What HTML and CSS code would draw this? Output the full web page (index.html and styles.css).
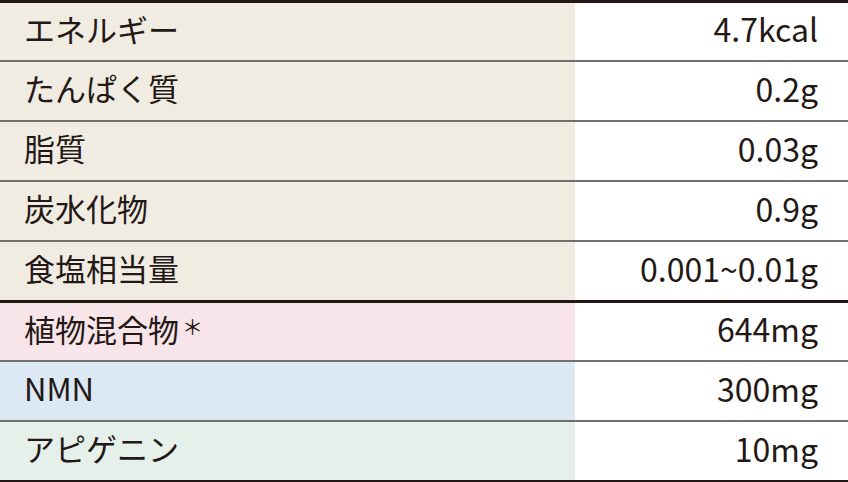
FILE: index.html
```html
<!DOCTYPE html>
<html lang="ja">
<head>
<meta charset="utf-8">
<link rel="stylesheet" href="styles.css">
</head>
<body>
<div class="table">
  <div class="row beige first"><div class="label">エネルギー</div><div class="value">4.7kcal</div></div>
  <div class="row beige"><div class="label">たんぱく質</div><div class="value">0.2g</div></div>
  <div class="row beige"><div class="label">脂質</div><div class="value">0.03g</div></div>
  <div class="row beige"><div class="label">炭水化物</div><div class="value">0.9g</div></div>
  <div class="row beige"><div class="label">食塩相当量</div><div class="value">0.001~0.01g</div></div>
  <div class="row pink group"><div class="label">植物混合物<span class="mark">＊</span></div><div class="value">644mg</div></div>
  <div class="row blue"><div class="label">NMN</div><div class="value">300mg</div></div>
  <div class="row green last"><div class="label">アピゲニン</div><div class="value">10mg</div></div>
</div>
</body>
</html>
```

FILE: styles.css
```css
html, body {
  margin: 0;
  padding: 0;
  background: #ffffff;
}
body {
  font-family: "Noto Sans CJK JP", "Noto Sans", sans-serif;
  color: #231815;
  width: 848px;
  height: 482px;
  overflow: hidden;
}
.table {
  display: flex;
  flex-direction: column;
}
.row {
  display: grid;
  grid-template-columns: 575px 1fr;
  height: 60px;
  box-sizing: border-box;
  border-top: 2px solid #707070;
}
.row.first {
  border-top: 3px solid #231815;
}
.row.group {
  border-top: 3px solid #231815;
}
.row.last {
  height: 62px;
  border-bottom: 2px solid #231815;
}
.label, .value {
  display: flex;
  align-items: center;
  line-height: 1;
  padding-bottom: 7px;
}
.label {
  padding-left: 24px;
  font-size: 31px;
}
.mark {
  margin-left: 3px;
  font-size: 21px;
  position: relative;
  top: -2px;
}
.value {
  justify-content: flex-end;
  padding-right: 30px;
  font-size: 32px;
  background: #ffffff;
}
.beige .label { background: #f0ece2; }
.pink .label { background: #f8e5e9; }
.blue .label { background: #dde8f5; }
.green .label { background: #e4f0e9; }
```
